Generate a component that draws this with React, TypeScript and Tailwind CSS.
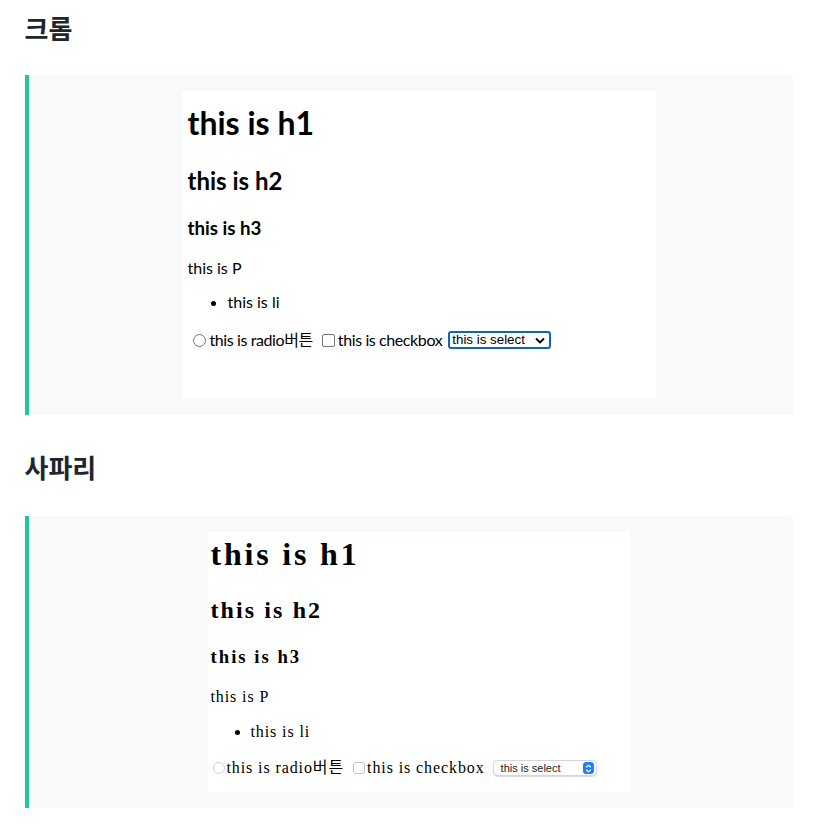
import React from 'react';

const KR = { fontFamily: '"Noto Sans CJK KR", "Noto Sans", sans-serif' };

function ChromeShot() {
  return (
    <div
      className="w-[474px] h-[308px] bg-white pl-[6px] text-black"
      style={{ fontFamily: 'Lato, "Noto Sans CJK KR", sans-serif' }}
    >
      <h1 className="mt-[12px] text-[32px] leading-[40px] font-bold">this is h1</h1>
      <h2 className="mt-[22px] text-[24px] leading-[32px] font-bold">this is h2</h2>
      <h3 className="mt-[18px] text-[18.72px] leading-[26px] font-bold">this is h3</h3>
      <p className="mt-[16px] text-[16px] leading-[22px]">this is P</p>
      <ul className="mt-[12px] pl-[40px] list-disc text-[16px] leading-[22px]">
        <li>this is li</li>
      </ul>
      <div className="mt-[16px] flex items-center text-[16px] leading-[22px] tracking-[-0.4px]">
        <span className="ml-[5px] mr-[4px] inline-block h-[13px] w-[13px] rounded-full border border-[#767676] bg-white" />
        <span>this is radio버튼</span>
        <span className="ml-[9px] mr-[3px] inline-block h-[13px] w-[13px] rounded-[2px] border border-[#767676] bg-white" />
        <span>this is checkbox</span>
        <div
          className="ml-[6px] flex h-[18px] w-[103px] items-center justify-between rounded-[3px] border-2 border-[#0b62d0] bg-white pl-[2px] pr-[4px] text-[13.33px] leading-none tracking-normal"
          style={{ fontFamily: '"Liberation Sans", Arial, sans-serif' }}
        >
          <span>this is select</span>
          <svg width="10" height="7" viewBox="0 0 10 7">
            <path d="M1 1.5 L5 5.5 L9 1.5" stroke="#000" strokeWidth="1.8" fill="none" />
          </svg>
        </div>
      </div>
    </div>
  );
}

function SafariShot() {
  const serif = { fontFamily: '"Liberation Serif", "Noto Sans CJK KR", serif' };
  return (
    <div className="w-[422px] h-[260px] bg-white pl-[3px] text-black" style={serif}>
      <h1 className="mt-[2px] text-[32px] leading-[40px] font-bold tracking-[2.8px]">this is h1</h1>
      <h2 className="mt-[21px] text-[24px] leading-[30px] font-bold tracking-[2.1px]">this is h2</h2>
      <h3 className="mt-[20px] text-[18.72px] leading-[24px] font-bold tracking-[2px]">this is h3</h3>
      <p className="mt-[18px] text-[16px] leading-[20px] tracking-[0.9px]">this is P</p>
      <ul className="mt-[15px] pl-[40px] list-disc text-[16px] leading-[20px] tracking-[0.9px]">
        <li>this is li</li>
      </ul>
      <div className="mt-[16px] flex items-center text-[16px] leading-[20px] tracking-[0.9px]">
        <span className="ml-[2px] mr-[2px] inline-block h-[12px] w-[12px] rounded-full border border-[#cfcfcf] bg-white" />
        <span>this is radio버튼</span>
        <span className="ml-[9px] mr-[2px] inline-block h-[12px] w-[12px] rounded-[3px] border border-[#c4c4c4] bg-white" />
        <span>this is checkbox</span>
        <div
          className="ml-[8px] flex h-[16px] w-[104px] items-center justify-between rounded-[5px] border border-[#d6d6d6] bg-white pl-[7px] pr-[2px] text-[11px] leading-none tracking-normal text-[#222] shadow-[0_0.5px_1px_rgba(0,0,0,0.15)]"
          style={{ fontFamily: '"Liberation Sans", Arial, sans-serif' }}
        >
          <span>this is select</span>
          <span className="flex h-[12px] w-[11px] items-center justify-center rounded-[3px] bg-[#1a82fb]">
            <svg width="7" height="9" viewBox="0 0 7 9">
              <path d="M1.2 3.3 L3.5 1.2 L5.8 3.3 M1.2 5.7 L3.5 7.8 L5.8 5.7" stroke="#fff" strokeWidth="1.2" fill="none" />
            </svg>
          </span>
        </div>
      </div>
    </div>
  );
}

function Quote({ children }: { children: React.ReactNode }) {
  return (
    <div className="flex justify-center rounded-r-[4px] border-l-4 border-[#20c997] bg-[#f8f9fa] pl-4 py-4">
      {children}
    </div>
  );
}

export default function App() {
  return (
    <div className="min-h-screen bg-white" style={KR}>
      <div className="mx-auto w-[768px]">
        <h2 className="pt-[10px] text-[26px] leading-[36px] font-bold text-[#212529]">크롬</h2>
        <div className="mt-[29px]">
          <Quote>
            <ChromeShot />
          </Quote>
        </div>
        <h2 className="mt-[34px] text-[26px] leading-[36px] font-bold text-[#212529]">사파리</h2>
        <div className="mt-[31px]">
          <Quote>
            <SafariShot />
          </Quote>
        </div>
      </div>
    </div>
  );
}
